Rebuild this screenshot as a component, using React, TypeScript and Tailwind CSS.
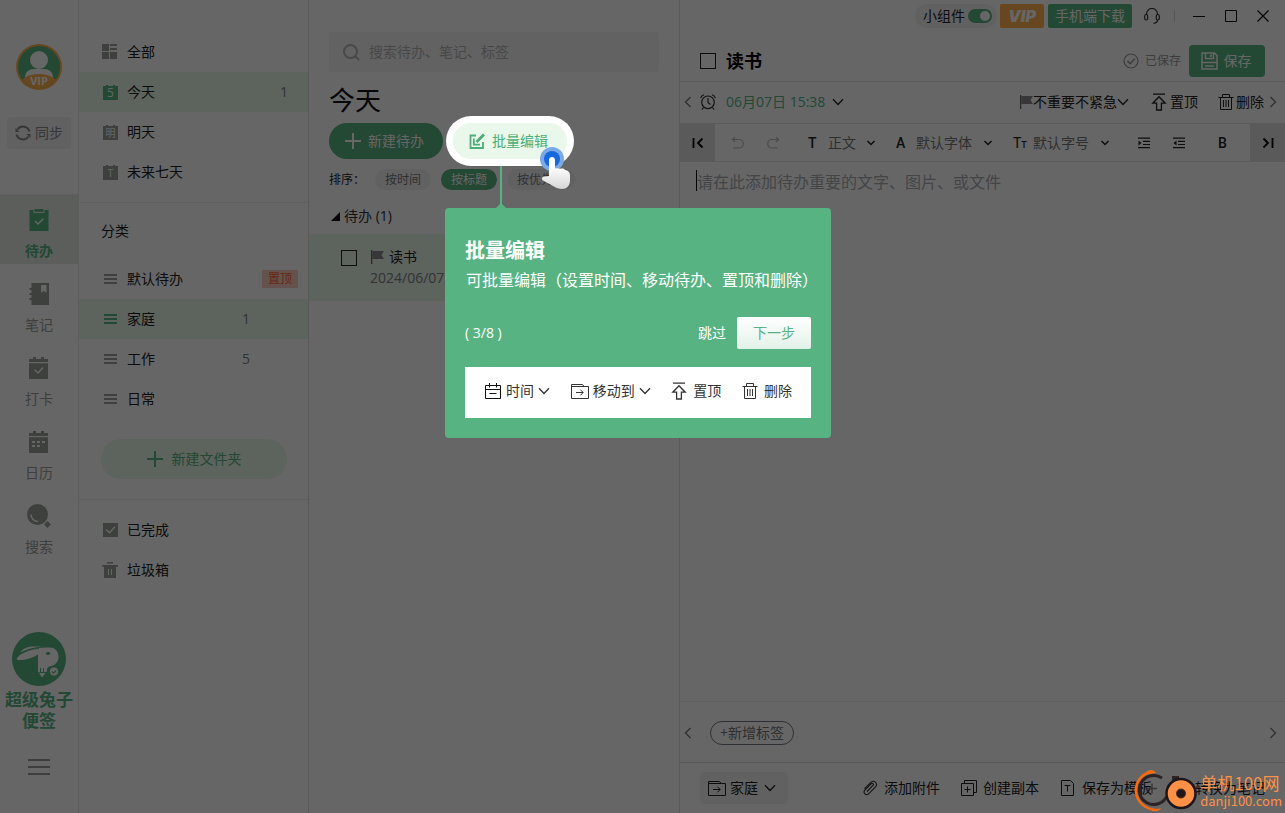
import type { ReactNode } from "react";
import clsx from "clsx";

type IconProps = { className?: string };

const ChevronDown = ({ className }: IconProps) => (
  <svg viewBox="0 0 12 8" fill="none" stroke="currentColor" strokeWidth={1.3} className={clsx("w-3 h-2 shrink-0", className)}>
    <path d="M1 1.2 6 6.5 11 1.2" />
  </svg>
);

const SmallChevron = () => (
  <svg viewBox="0 0 10 8" fill="none" stroke="currentColor" strokeWidth={1.5} className="w-[10px] h-2 shrink-0 pointer-events-none">
    <path d="M1.5 2 5 5.5 8.5 2" />
  </svg>
);

const ChevronSide = ({ right, className }: IconProps & { right?: boolean }) => (
  <svg viewBox="0 0 8 12" fill="none" stroke="currentColor" strokeWidth={1.3} className={clsx("w-2 h-3 shrink-0", className)}>
    <path d={right ? "M1.5 1 6.5 6 1.5 11" : "M6.5 1 1.5 6 6.5 11"} />
  </svg>
);

const Plus = ({ className }: IconProps) => (
  <svg viewBox="0 0 16 16" fill="currentColor" className={clsx("size-4 shrink-0", className)}>
    <path d="M7 0h2v7h7v2H9v7H7V9H0V7h7z" />
  </svg>
);

const Flag = () => (
  <svg viewBox="0 0 14 14" className="size-[14px] shrink-0">
    <path d="M1 0h1.3v14H1z" fill="#66666a" />
    <path d="M2.3 1H14l-2.4 4L14 9H2.3z" fill="#8a8a8e" />
  </svg>
);

const TopIcon = () => (
  <svg viewBox="0 0 16 18" fill="none" stroke="currentColor" strokeWidth={1.3} className="w-4 h-[18px] shrink-0">
    <path d="M2 1.2h12M8 3.8 1.8 10.2H5.6V17h4.8v-6.8h3.8z" />
  </svg>
);

const TrashLine = () => (
  <svg viewBox="0 0 16 16" fill="none" stroke="currentColor" strokeWidth={1} className="size-4 shrink-0">
    <path d="M.5 3.5h15M4.5 3V.5h7V3M2.5 3.5v12h11v-12M5.5 6v7M8 6v7M10.5 6v7" />
  </svg>
);

const FolderMove = () => (
  <svg viewBox="0 0 18 16" fill="none" stroke="currentColor" strokeWidth={1} className="w-[18px] h-4 shrink-0">
    <path d="M.5 15.500V1.500h10.6l2.4 2h4v12zM.5 3.500h13M5 9.500h7M9.400 6.700l2.800 2.800-2.800 2.800" />
  </svg>
);

const GridIcon = () => (
  <svg viewBox="0 0 16 16" fill="#9ba098" className="size-4">
    <path d="M0 0h7v7H0zM8 0h7v2H8zM8 4h7v2H8zM0 8h7v7H0zM8 8h7v7H8z" />
  </svg>
);

// Small calendar page with one glyph on it
const DayIcon = ({ glyph, active }: { glyph: string; active?: boolean }) => (
  <svg viewBox="0 0 16 16" className="size-4" fill={active ? "#58b382" : "#9ba098"}>
    <path d="M1 2h3V1h2v1h5V1h2v1h3v14H1z" />
    <text x="8.500" y="13" fill="#fff" textAnchor="middle" fontSize={active ? 12 : 10}>
      {glyph}
    </text>
  </svg>
);

const LinesIcon = ({ active }: { active?: boolean }) => (
  <svg viewBox="0 0 14 10" className="w-[14px] h-[10px]" fill={active ? "#58b382" : "#9ba098"}>
    <path d="M1 0h13v2H1zM1 4h13v2H1zM1 8h13v2H1z" />
  </svg>
);

const DoneIcon = () => (
  <svg viewBox="0 0 16 14" className="w-4 h-[14px]">
    <path d="M1 0h15v14H1z" fill="#9ba098" />
    <path d="m4 6.500 3.500 3.300 5.500-6" stroke="#fff" strokeWidth={1.400} fill="none" />
  </svg>
);

const BinIcon = () => (
  <svg viewBox="0 0 16 16" className="size-4">
    <path d="M5 0h6v1.500H5zM0 3h16v1.800h-2V16H2V4.800H0z" fill="#9ba098" />
    <path d="M6.500 7v6M9.500 7v6" stroke="#fff" strokeWidth={1} />
  </svg>
);

const TodoIcon = () => (
  <svg viewBox="0 0 20 22" className="w-5 h-[22px]">
    <path d="M.500 1h4v3h11V1h4v21h-19z" fill="#58b382" />
    <path d="M5.500 0h9v2.800h-9z" fill="#58b382" />
    <path d="m6 12 3 3 5.500-5.500" stroke="#fff" strokeWidth={1.400} fill="none" />
  </svg>
);

const NoteIcon = () => (
  <svg viewBox="0 0 20 22" className="w-5 h-[22px]">
    <path d="M2.500 0H20v22H2.500v-5H.5v-2h2v-3h-2v-2h2V7h-2V5h2z" fill="#9ba098" />
    <path d="M12 2h5.500v8l-2.700-2.300L12 10z" fill="#fff" />
  </svg>
);

const PunchIcon = () => (
  <svg viewBox="0 0 20 22" className="w-5 h-[22px]">
    <path d="M0 2h4V0h3v2h5V0h3v2h4v3H0zM0 6.300h19V22H0z" fill="#9ba098" />
    <path d="m5.500 12.500 3.500 3.500 5-5.500" stroke="#fff" strokeWidth={1.400} fill="none" />
  </svg>
);

const CalendarIcon = () => (
  <svg viewBox="0 0 20 22" className="w-5 h-[22px]">
    <path d="M0 2h4V0h3v2h5V0h3v2h4v3H0zM0 6.300h19V22H0z" fill="#9ba098" />
    <path d="M3 10h3v2H3zM8 10h3v2H8zM13 10h3v2h-3zM3 14h3v2H3zM8 14h3v2H8z" fill="#fff" />
  </svg>
);

const FindIcon = () => (
  <svg viewBox="0 0 24 24" className="size-6">
    <circle cx="10.500" cy="10.500" r="10.500" fill="#9ba098" />
    <path d="M4 10.500a7 7 0 0 0 7 7" stroke="#fff" strokeWidth={1.600} fill="none" />
    <path d="m20.500 17 3.500 3.500-3.500 3.500-3.500-3.500z" fill="#9ba098" />
  </svg>
);

const Avatar = () => (
  <svg viewBox="0 0 46 46" className="size-[46px]">
    <defs>
      <clipPath id="avatar">
        <circle cx="23" cy="23" r="21" />
      </clipPath>
    </defs>
    <circle cx="23" cy="23" r="23" fill="#ffb24f" />
    <g clipPath="url(#avatar)">
      <rect width="46" height="46" fill="#58b382" />
      <circle cx="23" cy="16" r="9" fill="#fff" />
      <path d="M9 36v-2c0-6 4-9 9-9h10c5 0 9 3 9 9v2z" fill="#fff" />
      <ellipse cx="23" cy="41" rx="19" ry="11" fill="#ffb24f" />
    </g>
    <text x="23" y="41" fill="#fff" textAnchor="middle" fontSize="11" fontWeight="700">
      VIP
    </text>
  </svg>
);

const RabbitLogo = () => (
  <svg viewBox="0 0 54 54" className="size-[54px]">
    <circle cx="27" cy="27" r="27" fill="#58b382" />
    <path
      d="M5 26c3-4 8-6 13-8 6-2 13-2.500 20-2.500 5 0 8.500 4 8.500 9 0 6-4 9.500-9.500 10l-2 2V39l-5 6.500-4-6V22.500c-5 3.500-12 5.500-18 5.500-3 0-4-.5-3-2z"
      fill="#fff"
    />
    <path d="M8 20.500c3-4 8-6 13-6 4 0 7 0 9 .5-8 0-15 2-22 5.500z" fill="#fff" />
    <path d="M9 21.500c6-3 12-5 18-5" stroke="#58b382" strokeWidth={0.800} fill="none" />
    <ellipse cx="36" cy="21.500" rx="2.200" ry="1.400" fill="#58b382" />
    <path d="M28.500 36v4M31.500 36v4M27 40.500h7" stroke="#58b382" strokeWidth={1} fill="none" />
    <circle cx="42" cy="39.500" r="4.600" fill="#fff" stroke="#58b382" strokeWidth={1} />
    <path d="m39.800 39.500 1.700 1.700 2.800-2.900" stroke="#58b382" strokeWidth={1.100} fill="none" />
  </svg>
);

const EditIcon = () => (
  <svg viewBox="0 0 16 16" fill="none" stroke="#4cae7a" strokeWidth={1.800} className="size-4">
    <path d="M7 2.500H1.500v12.500h12.500V9" />
    <path d="M4.800 5.500v6.200h6.200" />
    <path d="M7.500 9 15 1.500" strokeWidth={2.800} />
  </svg>
);

const HandPointer = () => (
  <svg viewBox="0 0 30 44" className="w-[30px] h-11">
    <defs>
      <linearGradient id="hand" x1="0" y1="0" x2="0" y2="1">
        <stop offset="0.3" stopColor="#fff" />
        <stop offset="1" stopColor="#d6d6d6" />
      </linearGradient>
    </defs>
    <circle cx="12" cy="12" r="12" fill="#7ba9e6" />
    <circle cx="12" cy="12" r="8" fill="#1767dd" />
    <path
      d="M9 13c0-4 6-4 6 0v8.500c2-.6 4-.3 5.500.3 2-.5 3.500 0 4.500 1.200 3 .5 5 2 5 5.500v5c0 5-3.500 8.500-8 8.500-3 0-6-1-8-2.500L3 33.500c-2-1.500-1-4 1.500-4L9 29z"
      fill="url(#hand)"
    />
  </svg>
);

const SiteMark = () => (
  <svg viewBox="0 0 64 44" className="w-16 h-11 shrink-0" fill="none">
    <path d="M28 9a14.500 14.500 0 1 0 4.500 19" stroke="#2b2326" strokeWidth={3} />
    <path d="M18 3C9 4 1 12 2 23c1 10 9 17 20 18" stroke="#ff6a0a" strokeWidth={2.500} />
    <path d="M11 5c3-5 8-5 11-1-4 .5-8 1-11 1zM14 38c4 2 8 3 13 1-2 4-8 5-13-1z" fill="#ff6a0a" />
    <path d="M18 14.500v10M13 19.500h10" stroke="#3a3436" strokeWidth={1.400} />
    <path d="M38 9h7" stroke="#2b2326" strokeWidth={4} />
    <circle cx="47" cy="24.500" r="14.500" fill="#ff9147" stroke="#1d1719" strokeWidth={2.500} />
    <circle cx="47" cy="24.500" r="4.500" fill="#1d1719" stroke="#4a2a1c" strokeWidth={1} />
  </svg>
);

const mainNav = [
  { label: "待办", icon: <TodoIcon />, active: true },
  { label: "笔记", icon: <NoteIcon /> },
  { label: "打卡", icon: <PunchIcon /> },
  { label: "日历", icon: <CalendarIcon /> },
  { label: "搜索", icon: <FindIcon /> },
];

const days = [
  { label: "全部", icon: <GridIcon /> },
  { label: "今天", icon: <DayIcon glyph="5" active />, count: 1, active: true },
  { label: "明天", icon: <DayIcon glyph="明" /> },
  { label: "未来七天", icon: <DayIcon glyph="T" /> },
];

const folders = [
  { label: "默认待办", pinned: true },
  { label: "家庭", count: 1, active: true },
  { label: "工作", count: 5 },
  { label: "日常" },
];

function SideRow({ icon, label, active, children }: { icon: ReactNode; label: string; active?: boolean; children?: ReactNode }) {
  return (
    <a href="#" className={clsx("flex items-center h-10 pl-[23px] pr-5 text-sm text-[#222]", active && "bg-[#e9f8e8]")}>
      <span className="flex justify-center w-4 mr-[9px]">{icon}</span>
      {label}
      {children}
    </a>
  );
}

function NavRail() {
  return (
    <nav className="flex flex-col w-[79px] shrink-0 border-r border-[#e8e8e8]">
      <div className="flex flex-col items-center gap-[27px] pt-11 pb-[45px] border-b border-[#efefef]">
        <Avatar />
        <button className="flex items-center justify-center gap-1 w-16 h-8 rounded bg-[#f3f3f3] text-sm text-[#888890]">
          <svg viewBox="0 0 16 16" fill="none" stroke="currentColor" strokeWidth={2} className="size-4">
            <path d="M14.500 6.500A6.700 6.700 0 0 0 2.500 4.500M1.500 9.500a6.700 6.700 0 0 0 12 2" />
            <path d="M.5 3v4h4zM15.500 13V9h-4z" fill="currentColor" stroke="none" />
          </svg>
          同步
        </button>
      </div>
      <div className="flex flex-col gap-[5px]">
        {mainNav.map((item) => (
          <a
            key={item.label}
            href="#"
            className={clsx(
              "flex flex-col items-center gap-[9px] h-[69px] pt-[13px] text-sm",
              item.active ? "bg-[#e4ece4] text-[#58b382] font-bold" : "text-[#9ba098]"
            )}
          >
            <span className="flex items-center h-6">{item.icon}</span>
            {item.label}
          </a>
        ))}
      </div>
      <div className="flex flex-col items-center mt-auto pb-[38px]">
        <RabbitLogo />
        <div className="mt-[3px] text-center text-[17px] leading-[21px] font-bold text-[#58b382]">
          超级兔子
          <br />
          便签
        </div>
        <button aria-label="菜单" className="mt-7">
          <svg viewBox="0 0 22 16" fill="#999" className="w-[22px] h-4">
            <path d="M0 0h22v2H0zM0 7h22v2H0zM0 14h22v2H0z" />
          </svg>
        </button>
      </div>
    </nav>
  );
}

function Sidebar() {
  return (
    <aside className="w-[230px] shrink-0 border-r border-[#dedede]">
      <div className="pt-8 pb-[10px] border-b border-[#efefef]">
        {days.map((d) => (
          <SideRow key={d.label} icon={d.icon} label={d.label} active={d.active}>
            {d.count && <span className="ml-auto text-[#808088]">{d.count}</span>}
          </SideRow>
        ))}
      </div>
      <div className="pb-5 border-b border-[#efefef]">
        <h2 className="h-14 pt-[18px] pl-[22px] text-sm text-[#222]">分类</h2>
        {folders.map((f) => (
          <SideRow key={f.label} icon={<LinesIcon active={f.active} />} label={f.label} active={f.active}>
            {f.count && <span className="ml-auto mr-[38px] text-[#808088]">{f.count}</span>}
            {f.pinned && (
              <span className="ml-auto -mr-[10px] px-[6px] h-[18px] leading-[18px] bg-[#fccdbf] text-xs text-[#ff6434]">置顶</span>
            )}
          </SideRow>
        ))}
        <button className="flex items-center justify-center gap-[9px] w-[186px] h-10 mt-5 ml-[22px] rounded-full bg-[#e9f8e8] text-sm text-[#58b382]">
          <Plus />
          新建文件夹
        </button>
      </div>
      <div className="pt-[10px]">
        <SideRow icon={<DoneIcon />} label="已完成" />
        <SideRow icon={<BinIcon />} label="垃圾箱" />
      </div>
    </aside>
  );
}

// Guide card that hangs under the highlighted button
function GuideCard() {
  return (
    <div className="absolute -left-2 top-[43px] w-[386px] text-left text-white">
      <div className="w-[2px] h-[38px] ml-[55px] bg-[#58b382]" />
      <svg viewBox="0 0 10 5" className="w-[10px] h-[5px] -mt-px ml-[51px]" fill="#58b382">
        <path d="M0 5 5 0l5 5z" />
      </svg>
      <div role="dialog" aria-label="批量编辑" className="px-5 pt-[29px] pb-5 rounded bg-[#58b382]">
        <h3 className="text-xl font-bold">批量编辑</h3>
        <p className="mt-[3px] pl-px text-base leading-6 whitespace-nowrap">可批量编辑（设置时间、移动待办、置顶和删除）</p>
        <div className="flex items-center mt-[25px] text-sm">
          <span>( 3/8 )</span>
          <button className="ml-auto mr-[11px]">跳过</button>
          <button className="w-[74px] h-8 rounded-xs bg-linear-to-b from-white to-[#e2f1e8] text-[#58b382]">下一步</button>
        </div>
        <div className="flex items-center justify-between h-[51px] mt-[18px] px-[19px] pb-[3px] bg-white text-sm text-[#333]">
          <button className="flex items-center gap-1">
            <svg viewBox="0 0 18 16" fill="none" stroke="#111" className="w-[18px] h-4">
              <path d="M1.500 2.500h15v13h-15zM1.500 6.500h15M5.500 0v4.500M12.500 0v4.500M5.500 10.500h7" />
            </svg>
            时间
            <ChevronDown />
          </button>
          <button className="flex items-center gap-1">
            <FolderMove />
            移动到
            <ChevronDown />
          </button>
          <button className="flex items-center gap-[6px]">
            <TopIcon />
            置顶
          </button>
          <button className="flex items-center gap-[6px]">
            <TrashLine />
            删除
          </button>
        </div>
      </div>
    </div>
  );
}

function TodoList() {
  return (
    <section className="w-[371px] shrink-0 border-r border-[#dedede]">
      <div className="px-5 pt-8">
        <label className="flex items-center gap-[9px] h-10 px-[14px] rounded bg-[#f4f4f4]">
          <svg viewBox="0 0 17 17" fill="none" stroke="#b5b5b5" strokeWidth={2} className="size-[17px]">
            <circle cx="7.500" cy="7.500" r="6.500" />
            <path d="m12.500 12.500 3.500 3.500" />
          </svg>
          <input type="search" aria-label="搜索" placeholder="搜索待办、笔记、标签" className="flex-1 text-sm outline-none placeholder:text-[#b5b5b5]" />
        </label>
        <h1 className="mt-2 text-[26px] leading-10 text-[#111]">今天</h1>
        <div className="flex gap-[10px] mt-[3px] text-sm">
          <button className="flex items-center justify-center gap-[7px] w-[114px] h-9 pr-[3px] rounded-full bg-[#58b382] text-white">
            <Plus />
            新建待办
          </button>
          <div className="relative z-20">
            <button className="flex items-center justify-center gap-[7px] w-[114px] h-9 pr-[3px] rounded-full bg-[#e9f8ea] ring-7 ring-white text-[#4cae7a]">
              <EditIcon />
              批量编辑
            </button>
            <GuideCard />
            <div className="absolute left-[87px] top-6">
              <HandPointer />
            </div>
          </div>
        </div>
        <div className="flex items-center gap-[10px] mt-[10px] text-xs text-[#77777f]">
          <span className="w-9 text-[#222]">排序：</span>
          <button className="w-14 h-[21px] rounded-full bg-[#f3f3f3]">按时间</button>
          <button className="w-14 h-[21px] rounded-full bg-[#58b382] text-white">按标题</button>
          <button className="w-[68px] h-[21px] rounded-full bg-[#f3f3f3]">按优先级</button>
        </div>
        <div className="flex items-center gap-1 h-[44px] pt-2 pl-[2px] text-sm text-[#333]">
          <svg viewBox="0 0 9 9" className="size-[9px]" fill="#111">
            <path d="M9 0v9H0z" />
          </svg>
          待办 (1)
        </div>
      </div>
      <div className="flex h-[67px] pl-8 pt-4 gap-[13px] bg-[#e9f8e8] text-sm">
        <input type="checkbox" aria-label="完成 读书" className="appearance-none size-4 shrink-0 border border-[#222]" />
        <div>
          <div className="flex items-center gap-[5px] h-[14px] text-[#222]">
            <Flag />
            读书
          </div>
          <div className="mt-1 text-[#808088]">2024/06/07 15:38</div>
        </div>
      </div>
    </section>
  );
}

function TitleBar() {
  return (
    <header className="flex items-center h-8 pr-4 justify-end text-sm">
      <label className="flex items-center gap-[3px] h-6 pl-2 pr-[5px] mr-[3px] rounded-full bg-[#f2f2f2] text-[#222]">
        小组件
        <input
          type="checkbox"
          defaultChecked
          className="appearance-none flex items-center justify-end w-6 h-[14px] pr-[2px] rounded-full bg-[#58b382] after:content-[''] after:size-[10px] after:rounded-full after:bg-white"
        />
      </label>
      <button className="w-11 h-6 mr-1 rounded-xs bg-[#ffb24f] font-[Inter] text-base font-black italic text-white">VIP</button>
      <button className="w-[84px] h-6 mr-3 rounded-xs bg-[#58b382] text-white">手机端下载</button>
      <svg viewBox="0 0 16 16" fill="none" stroke="#333" strokeWidth={1.200} className="size-4">
        <path d="M2.500 7V6a5.500 5.500 0 0 1 11 0v1M13.500 12c0 2-1.500 3-4 3.300" />
        <rect x="0.700" y="6.500" width="3" height="5.500" rx="1.500" />
        <rect x="12.300" y="6.500" width="3" height="5.500" rx="1.500" />
      </svg>
      <span className="w-px h-3 ml-[14px] mr-[18px] bg-[#d5d5d5]" />
      <div className="flex gap-5 text-[#111]">
        <button aria-label="最小化">
          <svg viewBox="0 0 12 12" stroke="currentColor" className="size-3">
            <path d="M0 6.500h12" />
          </svg>
        </button>
        <button aria-label="最大化">
          <svg viewBox="0 0 12 12" fill="none" stroke="currentColor" className="size-3">
            <path d="M.5.500h11v11H.5z" />
          </svg>
        </button>
        <button aria-label="关闭">
          <svg viewBox="0 0 12 12" stroke="currentColor" strokeWidth={1.200} className="size-3">
            <path d="m.5.500 11 11M11.500.500l-11 11" />
          </svg>
        </button>
      </div>
    </header>
  );
}

function FontSelect({ label, value, width }: { label: string; value: string; width: string }) {
  return (
    <>
      <select aria-label={label} defaultValue={value} className={clsx("appearance-none outline-none text-[#777]", width)}>
        <option>{value}</option>
      </select>
      <SmallChevron />
    </>
  );
}

function Toolbar() {
  return (
    <div className="flex items-center h-[38px] border-b border-[#e4e4e4] text-sm text-[#222]">
      <button aria-label="向左滚动" className="flex items-center justify-center w-[35px] h-[37px] shrink-0 bg-[#e0e0e0]">
        <svg viewBox="0 0 12 12" fill="none" stroke="#000" strokeWidth={1.800} className="size-3">
          <path d="M1.500 1v10M10.500 1.500 6 6l4.500 4.500" />
        </svg>
      </button>
      <button aria-label="撤销" className="ml-4">
        <svg viewBox="0 0 14 14" fill="none" stroke="#bbb" strokeWidth={1.200} className="size-[14px]">
          <path d="M4 1 1.500 3.500 4 6M1.500 3.500H8a4 4 0 0 1 0 8.500H2" />
        </svg>
      </button>
      <button aria-label="重做" className="ml-[21px]">
        <svg viewBox="0 0 14 14" fill="none" stroke="#bbb" strokeWidth={1.200} className="size-[14px]">
          <path d="m10 1 2.500 2.500L10 6M12.500 3.500H6A4 4 0 0 0 6 12h6" />
        </svg>
      </button>
      <span className="ml-7 mr-[10px] font-[Roboto] font-medium w-[10px]">T</span>
      <FontSelect label="段落" value="正文" width="w-[38px]" />
      <span className="ml-5 mr-[10px] font-[Roboto] font-medium w-[10px]">A</span>
      <FontSelect label="字体" value="默认字体" width="w-[67px]" />
      <span className="ml-5 mr-[7px] font-[Roboto] w-[13px]">
        T<small className="text-[9px] font-medium">T</small>
      </span>
      <FontSelect label="字号" value="默认字号" width="w-[67px]" />
      <button aria-label="增加缩进" className="ml-7">
        <svg viewBox="0 0 12 12" fill="currentColor" className="size-3">
          <path d="M0 .5h12v1.200H0zM5 3.700h7v1.200H5zM5 6.900h7v1.200H5zM0 10h12v1.200H0zM.5 3.500 3.500 6l-3 2.500z" />
        </svg>
      </button>
      <button aria-label="减少缩进" className="ml-[23px]">
        <svg viewBox="0 0 12 12" fill="currentColor" className="size-3">
          <path d="M0 .5h12v1.200H0zM5 3.700h7v1.200H5zM5 6.900h7v1.200H5zM0 10h12v1.200H0zM3.500 3.500.5 6l3 2.500z" />
        </svg>
      </button>
      <button aria-label="加粗" className="ml-[33px] font-[Roboto] font-medium">B</button>
      <button aria-label="向右滚动" className="flex items-center justify-center w-[35px] h-[37px] ml-auto shrink-0 bg-[#e0e0e0]">
        <svg viewBox="0 0 12 12" fill="none" stroke="#000" strokeWidth={1.800} className="size-3">
          <path d="M10.500 1v10M1.500 1.500 6 6l-4.500 4.500" />
        </svg>
      </button>
    </div>
  );
}

function Editor() {
  return (
    <main className="flex flex-col flex-1 min-w-0">
      <TitleBar />
      <div className="flex items-center h-[50px] pt-2 pl-5 pr-5 border-b border-[#e4e4e4]">
        <input type="checkbox" id="done" className="appearance-none size-4 border border-[#222]" />
        <label htmlFor="done" className="ml-[10px] text-lg font-bold text-black">读书</label>
        <span className="flex items-center gap-[6px] ml-auto mr-2 text-xs text-[#9a9a9a]">
          <svg viewBox="0 0 16 16" fill="none" stroke="currentColor" className="size-4">
            <circle cx="8" cy="8" r="7" strokeWidth={1.200} />
            <path d="m4.500 8 2.700 2.700 4.500-5" strokeWidth={1.600} />
          </svg>
          已保存
        </span>
        <button className="flex items-center justify-center gap-[6px] w-[76px] h-8 pr-[2px] rounded bg-[#58b382] text-sm text-white">
          <svg viewBox="0 0 17 18" fill="none" stroke="currentColor" strokeWidth={1.500} className="w-[17px] h-[18px]">
            <path d="M1 1h12.500L16 3.500V17H1zM4.500 1v5.500h8V1M1 10.500h15M4 14h9" />
            <path d="M10 2.500v2.500" strokeWidth={1.800} />
          </svg>
          保存
        </button>
      </div>
      <div className="flex items-center h-[42px] pl-1 pr-2 pb-[2px] border-b border-[#e4e4e4] text-sm text-[#222]">
        <ChevronSide className="text-[#777]" />
        <svg viewBox="0 0 16 16" fill="none" stroke="#333" strokeWidth={1.200} className="size-4 ml-2 mr-[10px]">
          <circle cx="8" cy="8.300" r="6.300" />
          <path d="M8 4v4.500l2.500 2M.6 4A6 6 0 0 1 4 .8M15.400 4A6 6 0 0 0 12 .8M3.500 13.500 2 15.500M12.500 13.500l1.500 2" />
        </svg>
        <button className="flex items-center gap-[7px] text-[#58b382]">
          06月07日 15:38
          <ChevronDown className="text-[#222]" />
        </button>
        <div className="flex items-center ml-auto mr-[22px]">
          <Flag />
          <select aria-label="优先级" className="appearance-none outline-none w-[84px]">
            <option>不重要不紧急</option>
          </select>
          <ChevronDown />
        </div>
        <button className="flex items-center gap-[3px] mr-5">
          <TopIcon />
          置顶
        </button>
        <button className="flex items-center gap-[2px] mr-[5px]">
          <TrashLine />
          删除
        </button>
        <ChevronSide right className="text-[#777]" />
      </div>
      <Toolbar />
      <div className="flex flex-1 pt-2 pl-4">
        <span className="w-px h-[21px] bg-black" />
        <textarea
          aria-label="内容"
          placeholder="请在此添加待办重要的文字、图片、或文件"
          className="flex-1 resize-none outline-none text-base placeholder:text-[#aaadb2]"
        />
      </div>
      <div className="flex items-center h-[61px] pt-[2px] pl-1 pr-2 border-t border-[#efefef] text-sm text-[#777]">
        <ChevronSide />
        <button className="w-[84px] h-6 ml-[18px] rounded-full border border-[#77777f] leading-[22px]">+新增标签</button>
        <ChevronSide right className="ml-auto" />
      </div>
      <footer className="flex items-center h-[51px] pl-5 pr-5 border-t border-[#dedede] text-sm text-[#222]">
        <label className="flex items-center gap-1 h-8 pl-2 pr-3 rounded bg-[#f3f3f3]">
          <FolderMove />
          <select aria-label="文件夹" className="appearance-none outline-none w-[30px]">
            <option>家庭</option>
          </select>
          <ChevronDown />
        </label>
        <div className="flex gap-[21px] ml-auto whitespace-nowrap">
          <button className="flex items-center gap-[6px]">
            <svg viewBox="0 0 16 16" fill="none" stroke="#333" strokeWidth={1.100} className="size-4">
              <path d="M5 11.500 11 5.500c1.200-1.400-.6-3-1.900-1.700L3 9.900c-2.600 2.800 1 6.400 3.800 3.700l6.500-6.500c3.300-3.500-1.200-7.800-4.700-4.500L2.500 8.700" />
            </svg>
            添加附件
          </button>
          <button className="flex items-center gap-[6px]">
            <svg viewBox="0 0 16 16" fill="none" stroke="#222" className="size-4">
              <path d="M.5 3.500h12v12H.5zM3.500 3.500v-3h12v12h-3M6.500 6.500v6M3.500 9.500h6" />
            </svg>
            创建副本
          </button>
          <button className="flex items-center gap-[6px]">
            <svg viewBox="0 0 16 16" fill="none" stroke="#222" className="size-4">
              <path d="M1.500.500h9l3 3v12h-12zM4.500 5.500h6M7.500 5.500v6" />
            </svg>
            保存为模板
          </button>
          <button className="flex items-center gap-[6px]">
            <svg viewBox="0 0 16 16" fill="none" stroke="#222" className="size-4">
              <path d="M1.500.500h9l3 3v12h-12zM4.500 6.500h6M4.500 10.500h6" />
            </svg>
            转换为笔记
          </button>
        </div>
      </footer>
    </main>
  );
}

export default function App() {
  return (
    <div className="relative flex min-h-screen bg-white font-['Open_Sans','Noto_Sans_CJK_SC',sans-serif]">
      <NavRail />
      <Sidebar />
      <TodoList />
      <Editor />
      <div className="absolute inset-0 z-10 bg-black/60" />
      <div className="absolute right-0 bottom-0 z-20 flex items-center pr-[3px] font-['Noto_Sans_CJK_SC',sans-serif] text-[#ff9147]">
        <SiteMark />
        <div className="ml-[2px]">
          <div className="text-[17px] leading-5">单机100网</div>
          <div className="text-[13px] leading-4">danji100.com</div>
        </div>
      </div>
    </div>
  );
}
